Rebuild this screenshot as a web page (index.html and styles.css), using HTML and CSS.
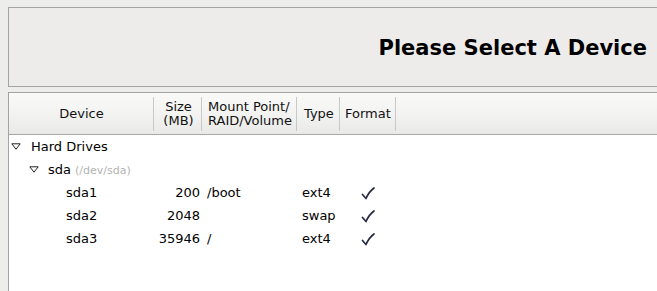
FILE: index.html
```html
<!DOCTYPE html>
<html>
<head>
<meta charset="utf-8">
<link rel="stylesheet" href="styles.css">
</head>
<body>
<div class="banner">
  <h1 class="title">Please Select A Device</h1>
</div>
<div class="tree">
  <div class="head">
    <div class="hcell c-dev center">Device</div>
    <div class="hcell c-size center">Size<br>(MB)</div>
    <div class="hcell c-mount">Mount Point/<br>RAID/Volume</div>
    <div class="hcell c-type">Type</div>
    <div class="hcell c-fmt">Format</div>
    <div class="hcell c-rest"></div>
  </div>
  <div class="body">
    <div class="row">
      <div class="cell dev lvl0"><svg class="exp" width="10" height="7" viewBox="0 0 10 7"><path d="M0.8 0.8 H9.2 L5 6.2 Z" fill="none" stroke="#222" stroke-width="1"/></svg>Hard Drives</div>
    </div>
    <div class="row">
      <div class="cell dev lvl1"><svg class="exp" width="10" height="7" viewBox="0 0 10 7"><path d="M0.8 0.8 H9.2 L5 6.2 Z" fill="none" stroke="#222" stroke-width="1"/></svg>sda <span class="path">(/dev/sda)</span></div>
    </div>
    <div class="row">
      <div class="cell dev lvl2">sda1</div>
      <div class="cell size">200</div>
      <div class="cell mount">/boot</div>
      <div class="cell type">ext4</div>
      <div class="cell fmt"><svg width="14" height="13" viewBox="0 0 14 13"><path d="M1.5 7.5 L5 11.5 C7 7 9.5 3.5 13 1" fill="none" stroke="#262b45" stroke-width="1.7" stroke-linecap="round" stroke-linejoin="round"/></svg></div>
    </div>
    <div class="row">
      <div class="cell dev lvl2">sda2</div>
      <div class="cell size">2048</div>
      <div class="cell mount"></div>
      <div class="cell type">swap</div>
      <div class="cell fmt"><svg width="14" height="13" viewBox="0 0 14 13"><path d="M1.5 7.5 L5 11.5 C7 7 9.5 3.5 13 1" fill="none" stroke="#262b45" stroke-width="1.7" stroke-linecap="round" stroke-linejoin="round"/></svg></div>
    </div>
    <div class="row">
      <div class="cell dev lvl2">sda3</div>
      <div class="cell size">35946</div>
      <div class="cell mount">/</div>
      <div class="cell type">ext4</div>
      <div class="cell fmt"><svg width="14" height="13" viewBox="0 0 14 13"><path d="M1.5 7.5 L5 11.5 C7 7 9.5 3.5 13 1" fill="none" stroke="#262b45" stroke-width="1.7" stroke-linecap="round" stroke-linejoin="round"/></svg></div>
    </div>
  </div>
</div>
</body>
</html>
```
FILE: styles.css
```css
html, body {
  margin: 0;
  padding: 0;
  height: 100%;
  overflow: hidden;
}
body {
  background: #ededec;
  font-family: "DejaVu Sans", sans-serif;
  font-size: 13px;
  color: #000;
  padding: 7px 0 0 8px;
  box-sizing: border-box;
  display: flex;
  flex-direction: column;
}
.banner {
  flex: none;
  height: 78px;
  border: 1px solid #a3a3a3;
  border-right: none;
  background: #edecea;
  display: flex;
  align-items: center;
  justify-content: flex-end;
  padding-right: 10px;
}
.title {
  margin: 0;
  font-size: 21px;
  font-weight: bold;
  color: #000;
  margin-top: 1px;
}
.tree {
  flex: 1;
  margin-top: 5px;
  border-top: 1px solid #a3a3a3;
  border-left: 1px solid #a3a3a3;
  background: #fff;
}
.head {
  display: grid;
  grid-template-columns: 145px 48px 95px 43px 56px 1fr;
  height: 41px;
  border-bottom: 1px solid #a8a8a8;
  background: linear-gradient(#fafaf9, #f2f2f1 55%, #e9e9e8);
}
.hcell {
  display: flex;
  flex-direction: column;
  justify-content: center;
  line-height: 14px;
  background: linear-gradient(#c9c9c8, #c9c9c8) right 4px / 1px 34px no-repeat;
  color: #111;
}
.hcell.center { align-items: center; text-align: center; }
.c-size { padding-left: 1px; align-items: center; }
.c-mount { padding-left: 6px; }
.c-type { padding-left: 7px; }
.c-fmt { padding-left: 5px; }
.c-rest { background: none; }
.row {
  display: grid;
  grid-template-columns: 145px 48px 95px 43px 56px 1fr;
  height: 23px;
  align-items: center;
  line-height: 15px;
}
.cell { white-space: nowrap; }
.dev { display: flex; align-items: center; }
.exp { margin-right: 10px; flex: none; }
.lvl0 { padding-left: 2px; }
.lvl1 { padding-left: 20px; }
.lvl1 .exp { margin-right: 9px; }
.lvl2 { padding-left: 57px; }
.path {
  font-size: 11px;
  color: #b3b3b3;
  margin-left: 4px;
  margin-top: 2px;
}
.size { text-align: right; padding-right: 2px; }
.mount { padding-left: 5px; }
.type { padding-left: 5px; }
.fmt { display: flex; justify-content: center; padding-top: 1px; }
```
